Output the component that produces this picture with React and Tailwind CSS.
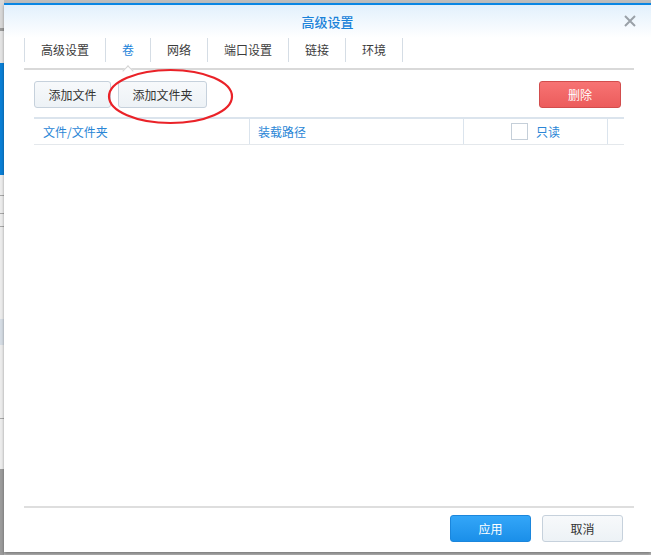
import React from "react";

const font = { fontFamily: '"Noto Sans CJK SC", "Noto Sans", sans-serif' };

function Tab({ label, active, first }) {
  return (
    <div
      className={`relative flex h-[24px] items-center px-4 text-[12px] border-r border-[#d5dde5] ${first ? "border-l" : ""} ${active ? "text-[#1a82d9]" : "text-[#3c3c3c]"}`}
    >
      {label}
      {active && (
        <span className="absolute left-1/2 top-[29px] -ml-[4px] h-[8px] w-[8px] rotate-45 border-l border-t border-[#d4d4d4] bg-white" />
      )}
    </div>
  );
}

function LightButton({ children, w }) {
  return (
    <button
      className={`flex h-[27px] items-center justify-center rounded-[3px] border border-[#c6d1dc] bg-gradient-to-b from-[#f7f9fb] to-[#edf2f6] text-[12px] text-[#333] ${w}`}
    >
      {children}
    </button>
  );
}

export default function App() {
  return (
    <div className="relative flex h-[555px] w-[651px] overflow-hidden bg-[#bdbdbd]" style={font}>
      {/* underlying page strip */}
      <div className="flex w-[4px] shrink-0 flex-col">
        <div className="h-[28px] bg-[#d8d8d8]" />
        <div className="h-[3px] bg-[#9a9a9a]" />
        <div className="h-[32px] bg-[#e4e4e4]" />
        <div className="h-[112px] bg-[#0a7fd6]" />
        <div className="h-[20px] bg-[#ededed]" />
        <div className="h-[1px] bg-[#a8a8a8]" />
        <div className="h-[17px] bg-[#ededed]" />
        <div className="h-[1px] bg-[#a8a8a8]" />
        <div className="h-[12px] bg-[#ededed]" />
        <div className="h-[1px] bg-[#a8a8a8]" />
        <div className="h-[92px] bg-[#ededed]" />
        <div className="h-[26px] bg-[#d6dde5]" />
        <div className="h-[73px] bg-[#ededed]" />
        <div className="h-[1px] bg-[#a8a8a8]" />
        <div className="h-[50px] bg-[#ededed]" />
        <div className="flex-1 bg-[#9c9c9c]" />
      </div>

      {/* dialog */}
      <div className="mt-[3px] flex h-[549px] flex-1 flex-col border-t-2 border-[#0a86e3] bg-white shadow-[0_2px_3px_rgba(0,0,0,0.35)]">
        {/* header */}
        <div className="relative flex h-[33px] shrink-0 items-center justify-center bg-gradient-to-b from-[#e2f0fc] to-white">
          <span className="text-[13px] font-medium text-[#1a82d9]">高级设置</span>
          <svg
            className="absolute right-[15px] top-[10px]"
            width="12"
            height="12"
            viewBox="0 0 12 12"
          >
            <path d="M1 1L11 11M11 1L1 11" stroke="#9aa1a8" strokeWidth="2" />
          </svg>
        </div>

        {/* body */}
        <div className="ml-[20px] mr-[17px] flex flex-1 flex-col">
          {/* tabs */}
          <div className="flex h-[32px] shrink-0 border-b-2 border-[#d9d9d9]">
            <Tab label="高级设置" first />
            <Tab label="卷" active />
            <Tab label="网络" />
            <Tab label="端口设置" />
            <Tab label="链接" />
            <Tab label="环境" />
          </div>

          {/* content */}
          <div className="flex flex-1 flex-col px-[10px] pt-[11px]">
            <div className="relative flex h-[27px] items-center gap-[7px]">
              <LightButton w="w-[77px]">添加文件</LightButton>
              <LightButton w="w-[89px]">添加文件夹</LightButton>
              <button className="ml-auto mr-[3px] flex h-[27px] w-[82px] items-center justify-center rounded-[3px] border border-[#d24d4d] bg-gradient-to-b from-[#f77373] to-[#ec5c5c] text-[12px] text-white">
                删除
              </button>
              <svg
                className="pointer-events-none absolute left-[73px] top-[-13px]"
                width="127"
                height="57"
                viewBox="0 0 127 57"
              >
                <ellipse cx="63.5" cy="28.5" rx="61.5" ry="26.5" fill="none" stroke="#ea2228" strokeWidth="2.2" />
              </svg>
            </div>

            {/* table header */}
            <div className="mt-[9px] flex h-[28px] border-t-2 border-b border-t-[#dbe4ed] border-b-[#e4e8ec] text-[12px] text-[#2a86d6]">
              <div className="flex w-[216px] items-center border-r border-[#dbe4ed] pl-[9px]">文件/文件夹</div>
              <div className="flex w-[214px] items-center border-r border-[#dbe4ed] pl-[8px]">装载路径</div>
              <div className="flex w-[144px] items-center justify-center gap-[8px] border-r border-[#dbe4ed]">
                <span className="h-[17px] w-[17px] border border-[#c5cfd9] bg-white" />
                <span>只读</span>
              </div>
            </div>
            <div className="flex-1" />
          </div>

          {/* footer */}
          <div className="flex h-[46px] shrink-0 items-start justify-end gap-[11px] border-t-2 border-[#dedede] pr-[11px] pt-[7px]">
            <button className="flex h-[27px] w-[81px] items-center justify-center rounded-[3px] border border-[#1b86dc] bg-gradient-to-b from-[#33a6f8] to-[#1a8fe9] text-[12px] text-white">
              应用
            </button>
            <LightButton w="w-[81px]">取消</LightButton>
          </div>
        </div>
      </div>
    </div>
  );
}
